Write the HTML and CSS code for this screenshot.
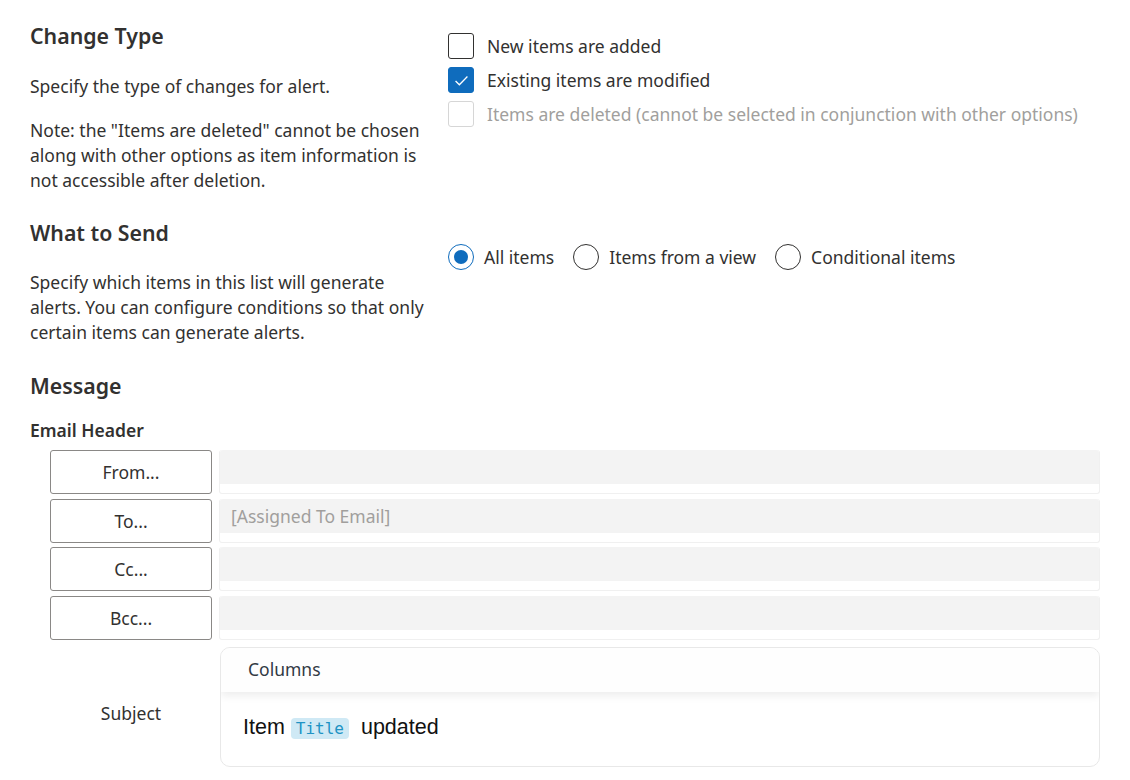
FILE: index.html
```html
<!DOCTYPE html>
<html lang="en">
<head>
  <meta charset="UTF-8">
  <title>Alert settings</title>
  <link rel="stylesheet" href="styles.css">
</head>
<body>

  <!-- Change type -->
  <div class="section">
    <div class="section-info">
      <h2>Change Type</h2>
      <p>Specify the type of changes for alert.</p>
      <p>Note: the "Items are deleted" cannot be chosen along with other options as item information is not accessible after deletion.</p>
    </div>
    <div class="section-options checks">
      <label class="check-item">
        <span class="box"></span>
        <span>New items are added</span>
      </label>
      <label class="check-item checked">
        <span class="box">
          <svg viewBox="0 0 16 16"><path d="M3 8.4l3.2 3.2 6.8-7" fill="none" stroke="#fff" stroke-width="1.1"/></svg>
        </span>
        <span>Existing items are modified</span>
      </label>
      <label class="check-item disabled">
        <span class="box"></span>
        <span>Items are deleted (cannot be selected in conjunction with other options)</span>
      </label>
    </div>
  </div>

  <!-- What to send -->
  <div class="section send">
    <div class="section-info">
      <h2>What to Send</h2>
      <p>Specify which items in this list will generate alerts. You can configure conditions so that only certain items can generate alerts.</p>
    </div>
    <div class="section-options radios">
      <label class="radio-item selected"><span class="dot"></span>All items</label>
      <label class="radio-item"><span class="dot"></span>Items from a view</label>
      <label class="radio-item"><span class="dot"></span>Conditional items</label>
    </div>
  </div>

  <!-- Message -->
  <div class="message">
    <h2>Message</h2>
    <h3>Email Header</h3>
    <div class="header-rows">
      <div class="header-row">
        <button class="addr-button">From...</button>
        <div class="addr-field"><div class="addr-input"></div></div>
      </div>
      <div class="header-row">
        <button class="addr-button">To...</button>
        <div class="addr-field"><div class="addr-input placeholder">[Assigned To Email]</div></div>
      </div>
      <div class="header-row">
        <button class="addr-button">Cc...</button>
        <div class="addr-field"><div class="addr-input"></div></div>
      </div>
      <div class="header-row">
        <button class="addr-button">Bcc...</button>
        <div class="addr-field"><div class="addr-input"></div></div>
      </div>
      <div class="subject-row">
        <div class="subject-label">Subject</div>
        <div class="editor">
          <div class="editor-toolbar">Columns</div>
          <div class="editor-body">Item <span class="token">Title</span> updated</div>
        </div>
      </div>
    </div>
  </div>

</body>
</html>
```

FILE: styles.css
```css
* {
  margin: 0;
  padding: 0;
  box-sizing: border-box;
}

body {
  font-family: "Segoe UI", "Noto Sans", sans-serif;
  font-size: 17.5px;
  color: #323130;
  background-color: #ffffff;
  padding: 23px 30px 0 30px;
}

/* Two column sections */
.section {
  display: flex;
  gap: 16px;
}

.section-info {
  width: 402px;
}

.section-info h2,
.message h2 {
  font-size: 21.3px;
  font-weight: 600;
  line-height: 26px;
  margin-bottom: 25px;
}

.section-info p {
  line-height: 25px;
  margin-bottom: 19px;
}

/* Checkboxes */
.checks {
  padding-top: 10px;
  display: flex;
  flex-direction: column;
  gap: 8px;
}

.check-item {
  display: flex;
  align-items: center;
  gap: 13px;
  line-height: 26px;
}

.check-item .box {
  width: 26px;
  height: 26px;
  border: 1px solid #323130;
  border-radius: 3px;
  display: flex;
  align-items: center;
  justify-content: center;
}

.check-item .box svg {
  width: 19px;
  height: 19px;
}

.check-item.checked .box {
  background-color: #0f6cbd;
  border-color: #0f6cbd;
}

.check-item.disabled {
  color: #a19f9d;
}

.check-item.disabled .box {
  border-color: #d6d6d6;
}

/* Radios */
.send {
  margin-top: 8px;
}

.send .section-info h2 {
  margin-bottom: 24px;
}

.radios {
  padding-top: 24px;
  display: flex;
  align-items: flex-start;
  gap: 19px;
}

.radio-item {
  display: flex;
  align-items: center;
  gap: 10px;
  line-height: 26px;
}

.radio-item .dot {
  width: 26px;
  height: 26px;
  border: 1px solid #323130;
  border-radius: 50%;
  display: flex;
  align-items: center;
  justify-content: center;
}

.radio-item.selected .dot {
  border-color: #0f6cbd;
}

.radio-item.selected .dot::after {
  content: "";
  width: 14px;
  height: 14px;
  border-radius: 50%;
  background-color: #0f6cbd;
}

/* Message section */
.message {
  margin-top: 9px;
}

.message h2 {
  margin-bottom: 20px;
}

.message h3 {
  font-size: 17.5px;
  font-weight: 600;
  line-height: 22px;
  margin-bottom: 9px;
}

.header-rows {
  padding-left: 20px;
  width: 1070px;
  display: flex;
  flex-direction: column;
  gap: 4.5px;
}

.header-row {
  display: flex;
  gap: 7px;
  height: 44px;
}

.addr-button {
  width: 162px;
  height: 44px;
  font-family: inherit;
  font-size: 17.5px;
  color: #323130;
  background-color: #ffffff;
  border: 1px solid #8a8886;
  border-radius: 3px;
}

.addr-field {
  flex: 1;
  height: 44px;
  border: 1px solid #f0f0f0;
  border-top: none;
  border-radius: 3px;
}

.addr-input {
  height: 34px;
  background-color: #f3f3f3;
  border-radius: 3px 3px 0 0;
  padding: 0 11px;
  line-height: 34px;
}

.addr-input.placeholder {
  color: #a19f9d;
}

/* Subject editor */
.subject-row {
  display: flex;
  gap: 8px;
  margin-top: 2.5px;
}

.subject-label {
  width: 162px;
  display: flex;
  align-items: center;
  justify-content: center;
  padding-top: 12px;
}

.editor {
  flex: 1;
  height: 120px;
  border: 1.5px solid #e8e8e8;
  border-radius: 10px;
  overflow: hidden;
}

.editor-toolbar {
  height: 44px;
  padding: 0 27px;
  line-height: 42px;
  color: #323a45;
  background-color: #fefefe;
  box-shadow: 0 4px 8px rgba(0, 0, 0, 0.07);
  position: relative;
}

.editor-body {
  padding: 23px 22px 0 22px;
  font-family: "Liberation Sans", Arial, sans-serif;
  font-size: 21.5px;
  color: #111;
}

.token {
  font-family: "DejaVu Sans Mono", "Liberation Mono", monospace;
  font-size: 16px;
  color: #2093c4;
  background-color: #cfe9f5;
  border-radius: 4px;
  padding: 1px 5px;
  margin-right: 6px;
}
```
